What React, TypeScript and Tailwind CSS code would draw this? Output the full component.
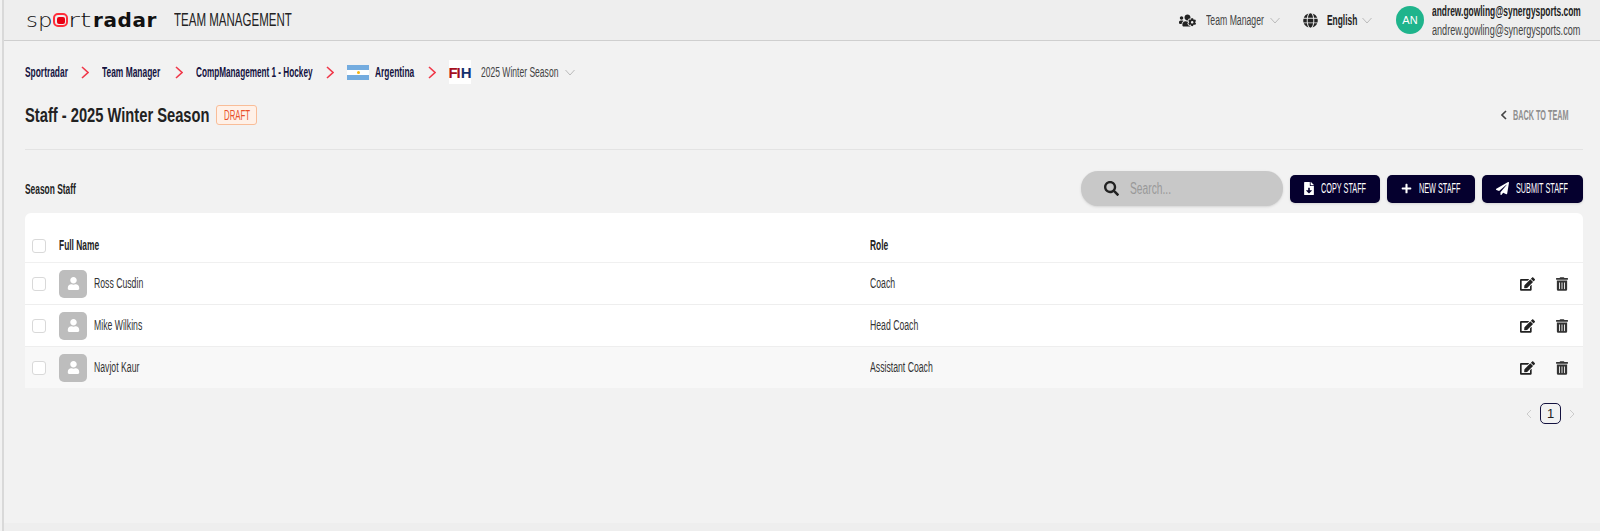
import React from 'react';
import { FaEdit, FaFileDownload, FaGlobe, FaPaperPlane, FaPlus, FaSearch, FaTrashAlt, FaUser, FaUsersCog } from 'react-icons/fa';

const staff = [
  { name: 'Ross Cusdin', role: 'Coach' },
  { name: 'Mike Wilkins', role: 'Head Coach' },
  { name: 'Navjot Kaur', role: 'Assistant Coach' },
];

// no condensed font is installed, so squeeze the text and hold the slot width on the outside
const Narrow = ({ w, scale = 'scale-x-[0.6]', children }: { w: string; scale?: string; children: React.ReactNode }) => (
  <span className={`${w} inline-block shrink-0 whitespace-nowrap`}>
    <span className={`${scale} inline-block origin-left`}>{children}</span>
  </span>
);

const Logo = () => (
  <div className="flex items-center w-[131px] text-[20px] leading-none text-[#111]" style={{ fontFamily: '"DejaVu Sans", sans-serif' }}>
    <Narrow w="w-[27px]" scale="scale-x-[1.14]"><span className="font-extralight">sp</span></Narrow>
    <span className="w-[15px] h-[14px] shrink-0 rounded-[5px] border-2 border-[#ff2d3a] flex items-center justify-center">
      <span className="w-[8px] h-[7px] rounded-[2px] bg-[#e60012]" />
    </span>
    <Narrow w="w-[25px]" scale="scale-x-[1.45]"><span className="font-extralight">rt</span></Narrow>
    <span className="font-bold tracking-[0.6px]">radar</span>
  </div>
);

const Sep = () => (
  <svg className="w-[8px] h-[13px] mx-[13px] shrink-0 text-[#f0394a]" viewBox="0 0 8 13" fill="none" stroke="currentColor" strokeWidth="1.6">
    <path d="M1 1l6 5.500-6 5.500" />
  </svg>
);

const Caret = () => (
  <svg className="w-[12px] h-[7px] ml-[5px] shrink-0 text-[#bbb]" viewBox="0 0 12 7" fill="none" stroke="currentColor" strokeWidth="1">
    <path d="M1.500 1l4.500 5 4.500-5" />
  </svg>
);

const Crumb = ({ w, scale, children }: { w: string; scale?: string; children: React.ReactNode }) => (
  <span className="text-[14px] font-bold text-[#14123f]"><Narrow w={w} scale={scale}>{children}</Narrow></span>
);

const ActionButton = ({ icon, label, width, textWidth }: { icon: React.ReactNode; label: string; width: string; textWidth: string }) => (
  <button className={`${width} h-[28px] rounded-[5px] bg-[#05002e] text-white flex items-center justify-center gap-[7px] text-[14px] shadow-sm`}>
    {icon}
    <Narrow w={textWidth} scale="scale-x-[0.52]">{label}</Narrow>
  </button>
);

const Checkbox = () => <div className="w-[14px] h-[14px] shrink-0 rounded-[3px] border border-[#d9d9d9] bg-white" />;

export default function App() {
  return (
    <div className="w-[1600px] h-[531px] overflow-hidden bg-[#f2f2f2] pl-[2px] flex text-[#222]" style={{ fontFamily: '"Liberation Sans", sans-serif' }}>
      <div className="flex-1 border-l-2 border-[#d9d9d9] flex flex-col min-w-0">
        {/* top bar */}
        <header className="h-[41px] shrink-0 bg-[#eeeeee] border-b border-[#cfcfcf] flex items-center pl-[22px] pr-[18px]">
          <Logo />
          <span className="ml-[17px] text-[18px] text-[#222]"><Narrow w="w-[117px]" scale="scale-x-[0.64]">TEAM MANAGEMENT</Narrow></span>
          <div className="ml-auto flex items-center">
            <FaUsersCog className="w-[17px] h-[17px] text-[#222]" />
            <span className="ml-[10px] text-[14px] text-[#444]"><Narrow w="w-[58px]" scale="scale-x-[0.62]">Team Manager</Narrow></span>
            <Caret />
            <FaGlobe className="ml-[22px] w-[15px] h-[15px] text-[#222]" />
            <span className="ml-[9px] text-[14px] font-bold text-[#222]"><Narrow w="w-[29px]">English</Narrow></span>
            <Caret />
            <div className="ml-[23px] w-[28px] h-[28px] rounded-full bg-[#1fb48c] text-white text-[11px] flex items-center justify-center">AN</div>
            <div className="ml-[8px] flex flex-col gap-[5px] text-[14px] leading-[14px]">
              <span className="font-bold text-[#222]"><Narrow w="w-[150px]">andrew.gowling@synergysports.com</Narrow></span>
              <span className="text-[#444]"><Narrow w="w-[150px]" scale="scale-x-[0.65]">andrew.gowling@synergysports.com</Narrow></span>
            </div>
          </div>
        </header>

        <main className="flex-1 pl-[21px] pr-[17px] flex flex-col">
          {/* breadcrumb */}
          <nav className="mt-[22px] h-[18px] flex items-center">
            <Crumb w="w-[43px]">Sportradar</Crumb>
            <Sep />
            <Crumb w="w-[60px]">Team Manager</Crumb>
            <Sep />
            <Crumb w="w-[117px]" scale="scale-x-[0.585]">CompManagement 1 - Hockey</Crumb>
            <Sep />
            <div className="w-[22px] h-[15px] shrink-0 flex flex-col mr-[6px]">
              <div className="flex-1 bg-[#74acdf]" />
              <div className="flex-1 bg-white flex items-center justify-center"><span className="w-[3px] h-[3px] rounded-full bg-[#f6b40e]" /></div>
              <div className="flex-1 bg-[#74acdf]" />
            </div>
            <Crumb w="w-[40px]">Argentina</Crumb>
            <Sep />
            <div className="w-[22px] h-[24px] shrink-0 bg-white flex items-center justify-center text-[15px] font-bold leading-none mr-[10px]">
              <span className="text-[#a50f1e] tracking-[-1px]">FI</span><span className="text-[#14306e] ml-[1px]">H</span>
            </div>
            <span className="text-[14px] text-[#444]"><Narrow w="w-[78px]" scale="scale-x-[0.61]">2025 Winter Season</Narrow></span>
            <Caret />
          </nav>

          {/* title */}
          <div className="mt-[22px] h-[24px] flex items-center">
            <h1 className="text-[21px] font-bold text-[#222]"><Narrow w="w-[185px]" scale="scale-x-[0.7]">Staff - 2025 Winter Season</Narrow></h1>
            <span className="ml-[6px] w-[41px] h-[20px] pl-[7px] flex items-center rounded-[3px] border border-[#f9bd98] bg-[#fff1e8] text-[14px] text-[#e8502c]"><Narrow w="w-[27px]" scale="scale-x-[0.56]">DRAFT</Narrow></span>
            <div className="ml-auto mr-[14px] flex items-center text-[14px] font-bold text-[#8f8f8f]">
              <svg className="w-[6px] h-[10px] mr-[6px] text-[#444]" viewBox="0 0 6 10" fill="none" stroke="currentColor" strokeWidth="1.6">
                <path d="M5 1L1 5l4 4" />
              </svg>
              <Narrow w="w-[56px]" scale="scale-x-[0.52]">BACK TO TEAM</Narrow>
            </div>
          </div>

          <div className="mt-[22px] border-t border-[#e3e3e3]" />

          {/* toolbar */}
          <div className="mt-[21px] h-[35px] flex items-center">
            <span className="text-[14px] font-bold text-[#222] pt-[2px]"><Narrow w="w-[51px]">Season Staff</Narrow></span>
            <div className="ml-auto w-[202px] h-[35px] rounded-[17px] bg-[#c8c8c8] flex items-center pl-[23px] shadow-sm">
              <FaSearch className="w-[15px] h-[15px] text-[#222]" />
              <span className="ml-[11px] text-[16px] text-[#999]"><Narrow w="w-[41px]" scale="scale-x-[0.64]">Search...</Narrow></span>
            </div>
            <div className="ml-[7px] flex gap-[7px]">
              <ActionButton width="w-[90px]" textWidth="w-[45px]" label="COPY STAFF" icon={<FaFileDownload className="w-[10px] h-[13px]" />} />
              <ActionButton width="w-[88px]" textWidth="w-[42px]" label="NEW STAFF" icon={<FaPlus className="w-[11px] h-[11px]" />} />
              <ActionButton width="w-[101px]" textWidth="w-[53px]" label="SUBMIT STAFF" icon={<FaPaperPlane className="w-[13px] h-[13px]" />} />
            </div>
          </div>

          {/* table */}
          <div className="mt-[7px] bg-white rounded-t-[6px] overflow-hidden text-[14px]">
            <div className="h-[50px] pt-[16px] pl-[7px] flex items-center border-b border-[#f0f0f0] font-bold">
              <Checkbox />
              <span className="ml-[13px] w-[811px]"><Narrow w="w-[40px]">Full Name</Narrow></span>
              <Narrow w="w-[20px]">Role</Narrow>
            </div>
            {staff.map((person, i) => (
              <div key={person.name} className={`h-[42px] last:h-[41px] pl-[7px] pr-[15px] flex items-center border-b border-[#eee] last:border-b-0 text-[#333] ${i === 2 ? 'bg-[#f8f8f8]' : ''}`}>
                <Checkbox />
                <div className="ml-[13px] w-[28px] h-[28px] shrink-0 rounded-[5px] bg-[#bdbdbd] flex items-center justify-center">
                  <FaUser className="w-[13px] h-[13px] text-white" />
                </div>
                <span className="ml-[7px] w-[776px]"><Narrow w="w-[60px]" scale="scale-x-[0.62]">{person.name}</Narrow></span>
                <Narrow w="w-[70px]" scale="scale-x-[0.62]">{person.role}</Narrow>
                <FaEdit className="ml-auto w-[15px] h-[14px] text-[#222]" />
                <FaTrashAlt className="ml-[21px] w-[12px] h-[14px] text-[#333]" />
              </div>
            ))}
          </div>

          {/* pagination */}
          <div className="mt-[15px] flex items-center justify-end pr-[8px] text-[#ccc]">
            <svg className="w-[6px] h-[10px]" viewBox="0 0 6 10" fill="none" stroke="currentColor"><path d="M5 1L1 5l4 4" /></svg>
            <span className="mx-[8px] w-[21px] h-[21px] rounded-[5px] border border-[#14123f] flex items-center justify-center text-[13px] text-[#222]">1</span>
            <svg className="w-[6px] h-[10px]" viewBox="0 0 6 10" fill="none" stroke="currentColor"><path d="M1 1l4 4-4 4" /></svg>
          </div>
        </main>
        <div className="h-[8px] shrink-0 bg-[#eeeeee]" />
      </div>
    </div>
  );
}
